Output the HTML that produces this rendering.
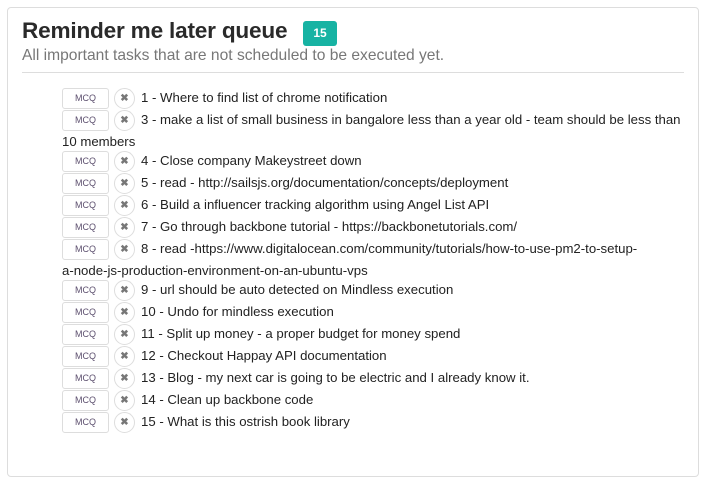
<!DOCTYPE html>
<html><head><meta charset="utf-8"><style>
*{margin:0;padding:0;box-sizing:border-box;white-space:nowrap}
body{width:706px;height:461px;background:#fff;font-family:"Liberation Sans",sans-serif;position:relative;overflow:hidden;color:#222}
.card{position:absolute;left:7px;top:7px;width:692px;height:470px;border:1px solid #ddd;border-radius:4px}
h1{position:absolute;left:22px;top:18px;font-size:22.6px;font-weight:bold;color:#2a2a2a;letter-spacing:-0.2px}
.badge{position:absolute;left:303px;top:21px;width:34px;height:25px;background:#17b3a3;border-radius:3px;color:#fff;font-size:12px;font-weight:bold;text-align:center;line-height:25px}
.sub{position:absolute;left:22px;top:47px;font-size:15.6px;color:#777}
.hr{position:absolute;left:22px;top:72px;width:662px;height:1px;background:#ddd}
.b{position:absolute;left:62px;width:47px;height:21px;border:1px solid #ddd;border-radius:3px;font-size:9px;color:#5c4f6e;text-align:center;line-height:19px}
.x{position:absolute;left:114px;width:21px;height:21px;border:1px solid #ddd;border-radius:50%;font-size:10px;color:#777;text-align:center;line-height:19px;font-weight:bold}
.t{position:absolute;font-size:13.2px;color:#222;line-height:20px}
</style></head><body>
<div class="card"></div>
<h1>Reminder me later queue</h1>
<div class="badge">15</div>
<div class="sub">All important tasks that are not scheduled to be executed yet.</div>
<div class="hr"></div>
<div class="b" style="top:88px">MCQ</div><div class="x" style="top:88px">✖</div><div class="t" style="left:141px;top:88px">1 - Where to find list of chrome notification</div>
<div class="b" style="top:110px">MCQ</div><div class="x" style="top:110px">✖</div><div class="t" style="left:141px;top:110px">3 - make a list of small business in bangalore less than a year old - team should be less than</div>
<div class="t" style="left:62px;top:132px">10 members</div>
<div class="b" style="top:151px">MCQ</div><div class="x" style="top:151px">✖</div><div class="t" style="left:141px;top:151px">4 - Close company Makeystreet down</div>
<div class="b" style="top:173px">MCQ</div><div class="x" style="top:173px">✖</div><div class="t" style="left:141px;top:173px">5 - read - http://sailsjs.org/documentation/concepts/deployment</div>
<div class="b" style="top:195px">MCQ</div><div class="x" style="top:195px">✖</div><div class="t" style="left:141px;top:195px">6 - Build a influencer tracking algorithm using Angel List API</div>
<div class="b" style="top:217px">MCQ</div><div class="x" style="top:217px">✖</div><div class="t" style="left:141px;top:217px">7 - Go through backbone tutorial - https://backbonetutorials.com/</div>
<div class="b" style="top:239px">MCQ</div><div class="x" style="top:239px">✖</div><div class="t" style="left:141px;top:239px">8 - read -https://www.digitalocean.com/community/tutorials/how-to-use-pm2-to-setup-</div>
<div class="t" style="left:62px;top:261px">a-node-js-production-environment-on-an-ubuntu-vps</div>
<div class="b" style="top:280px">MCQ</div><div class="x" style="top:280px">✖</div><div class="t" style="left:141px;top:280px">9 - url should be auto detected on Mindless execution</div>
<div class="b" style="top:302px">MCQ</div><div class="x" style="top:302px">✖</div><div class="t" style="left:141px;top:302px">10 - Undo for mindless execution</div>
<div class="b" style="top:324px">MCQ</div><div class="x" style="top:324px">✖</div><div class="t" style="left:141px;top:324px">11 - Split up money - a proper budget for money spend</div>
<div class="b" style="top:346px">MCQ</div><div class="x" style="top:346px">✖</div><div class="t" style="left:141px;top:346px">12 - Checkout Happay API documentation</div>
<div class="b" style="top:368px">MCQ</div><div class="x" style="top:368px">✖</div><div class="t" style="left:141px;top:368px">13 - Blog - my next car is going to be electric and I already know it.</div>
<div class="b" style="top:390px">MCQ</div><div class="x" style="top:390px">✖</div><div class="t" style="left:141px;top:390px">14 - Clean up backbone code</div>
<div class="b" style="top:412px">MCQ</div><div class="x" style="top:412px">✖</div><div class="t" style="left:141px;top:412px">15 - What is this ostrish book library</div>
</body></html>
